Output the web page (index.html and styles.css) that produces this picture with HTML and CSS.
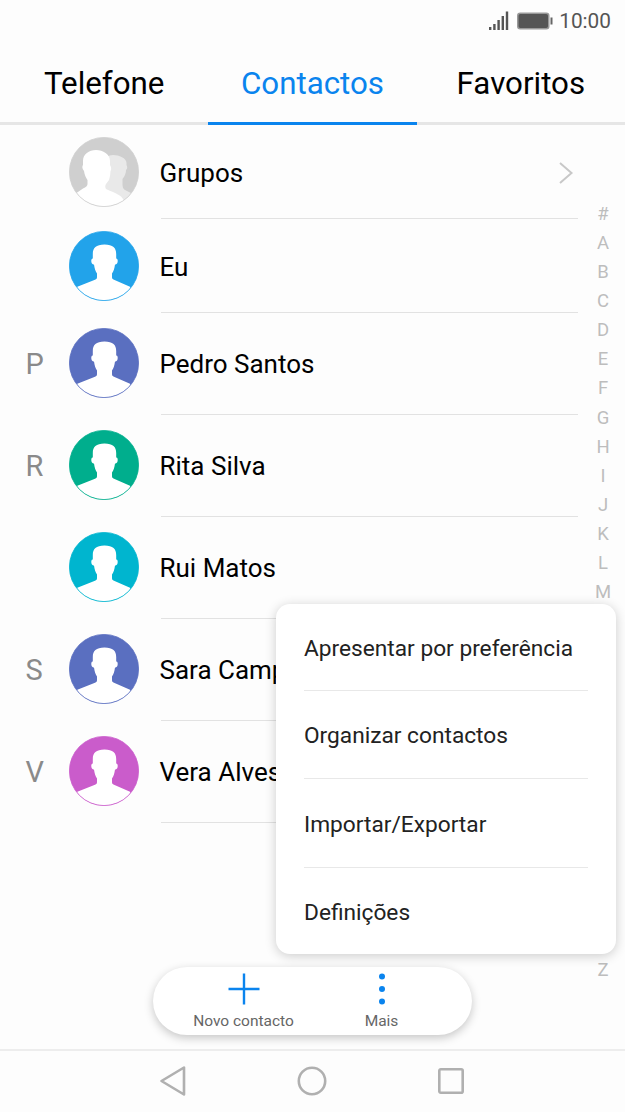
FILE: index.html
```html
<!DOCTYPE html>
<html lang="pt">

<head>
  <meta charset="UTF-8">
  <meta name="viewport" content="width=device-width, initial-scale=1.0">
  <title>Contactos</title>
  <link rel="stylesheet" href="styles.css">
</head>

<body>
  <svg class="defs" width="0" height="0">
    <defs>
      <clipPath id="disc">
        <circle cx="35" cy="35" r="34.5"></circle>
      </clipPath>
      <symbol id="person" viewBox="0 0 70 70">
        <circle cx="35" cy="35" r="34.6" fill="currentColor"></circle>
        <path clip-path="url(#disc)" fill="#fff" d="M35.500 13.500C27 13.500 23.800 17 23.800 23V27.500C22.300 27.500 22 29.500 22.500 31.500C23 33 24 33.500 25 33.500C25.500 37.500 26.500 40.500 28 42.500V46C28 47.500 27.500 48 26 48.700L8.300 55.700L4 70H66L61 55.700L45 48.700C43.500 48 43 47.500 43 46V42.500C44.500 40.500 45.500 37.500 46 33.500C47 33.500 48 33 48.500 31.500C49 29.500 48.700 27.500 47.200 27.500V23C47.200 17 44 13.500 35.500 13.500Z"></path>
        <circle cx="35" cy="35" r="34.6" fill="none" stroke="currentColor" stroke-width="0.8"></circle>
      </symbol>
    </defs>
  </svg>

  <div class="status">
    <svg class="signal" width="20" height="20" viewBox="0 0 20 20">
      <rect x="0" y="16" width="2.400" height="3" fill="#555"></rect>
      <rect x="4.200" y="13" width="2.400" height="6" fill="#555"></rect>
      <rect x="8.400" y="9" width="2.400" height="10" fill="#555"></rect>
      <rect x="12.600" y="5" width="2.400" height="14" fill="#555"></rect>
      <rect x="16.800" y="0.500" width="2.400" height="18.500" fill="#555"></rect>
    </svg>
    <svg class="battery" width="36" height="18" viewBox="0 0 36 18">
      <rect x="0.750" y="1.250" width="31" height="15.500" rx="2.500" fill="#555" stroke="#999" stroke-width="1.500"></rect>
      <rect x="33.500" y="5.500" width="2" height="7" fill="#666"></rect>
    </svg>
    <span class="clock">10:00</span>
  </div>

  <nav class="tabs">
    <a class="tab">Telefone</a>
    <a class="tab active">Contactos</a>
    <a class="tab">Favoritos</a>
  </nav>

  <main class="list">
    <div class="row first">
      <span class="letter"></span>
      <svg class="avatar" viewBox="0 0 70 70">
        <circle cx="35" cy="35" r="34.6" fill="#cfcfcf"></circle>
        <path clip-path="url(#disc)" fill="#e9e9e9" d="M44 18C39 18 36 21 36 26V50L36 56L56 70H70V60L56 53C54 52 53.500 50 53.500 47V42C56 39 57 36 57 33C58.500 32 58.500 30 57.500 28V26C57.500 21 50 18 44 18Z"></path>
        <path clip-path="url(#disc)" fill="#fff" d="M27 13C20 13 14 17 14 24V28C13 29 13 32 15 34C15.500 38 17 41 18.500 43V47C18.500 49 17 50 14 51.500L6 57L4 70H56L54 62C52 58 48 57 37 52C36 50 36 49 37 47L40 43C41 40 41.500 37 41.500 34C42.500 33 42.500 30 41 28V24C41 17 34 13 27 13Z"></path>
        <circle cx="35" cy="35" r="34.6" fill="none" stroke="#cfcfcf" stroke-width="0.8"></circle>
      </svg>
      <span class="name">Grupos</span>
      <svg class="chevron" width="16" height="24" viewBox="0 0 16 24">
        <path d="M2 2L13.500 12L2 22" fill="none" stroke="#c8c8c8" stroke-width="2"></path>
      </svg>
    </div>
    <div class="row first">
      <span class="letter"></span>
      <svg class="avatar c-blue"><use href="#person"></use></svg>
      <span class="name">Eu</span>
    </div>
    <div class="row">
      <span class="letter">P</span>
      <svg class="avatar c-indigo"><use href="#person"></use></svg>
      <span class="name">Pedro Santos</span>
    </div>
    <div class="row">
      <span class="letter">R</span>
      <svg class="avatar c-green"><use href="#person"></use></svg>
      <span class="name">Rita Silva</span>
    </div>
    <div class="row">
      <span class="letter"></span>
      <svg class="avatar c-cyan"><use href="#person"></use></svg>
      <span class="name">Rui Matos</span>
    </div>
    <div class="row">
      <span class="letter">S</span>
      <svg class="avatar c-indigo"><use href="#person"></use></svg>
      <span class="name">Sara Campos</span>
    </div>
    <div class="row">
      <span class="letter">V</span>
      <svg class="avatar c-purple"><use href="#person"></use></svg>
      <span class="name">Vera Alves</span>
    </div>
  </main>

  <ul class="index">
    <li>#</li><li>A</li><li>B</li><li>C</li><li>D</li><li>E</li><li>F</li><li>G</li><li>H</li>
    <li>I</li><li>J</li><li>K</li><li>L</li><li>M</li><li>N</li><li>O</li><li>P</li><li>Q</li>
    <li>R</li><li>S</li><li>T</li><li>U</li><li>V</li><li>W</li><li>X</li><li>Y</li><li>Z</li>
  </ul>

  <div class="menu">
    <div class="menu-item">Apresentar por preferência</div>
    <div class="menu-item">Organizar contactos</div>
    <div class="menu-item">Importar/Exportar</div>
    <div class="menu-item">Definições</div>
  </div>

  <div class="actions">
    <div class="action">
      <svg width="32" height="32" viewBox="0 0 32 32">
        <path d="M16 0.500V31.500M0.500 16H31.500" stroke="#0a84ee" stroke-width="2.400" fill="none"></path>
      </svg>
      <span>Novo contacto</span>
    </div>
    <div class="action">
      <svg width="32" height="32" viewBox="0 0 32 32">
        <circle cx="16" cy="3.500" r="3" fill="#0a84ee"></circle>
        <circle cx="16" cy="16" r="3" fill="#0a84ee"></circle>
        <circle cx="16" cy="28.500" r="3" fill="#0a84ee"></circle>
      </svg>
      <span>Mais</span>
    </div>
  </div>

  <footer class="navbar">
    <svg width="28" height="32" viewBox="0 0 28 32">
      <path d="M25 2.500V29.500L2.500 16Z" fill="none" stroke="#b0b0b0" stroke-width="2.600" stroke-linejoin="round"></path>
    </svg>
    <svg width="30" height="30" viewBox="0 0 30 30">
      <circle cx="15" cy="15" r="13.200" fill="none" stroke="#b0b0b0" stroke-width="2.600"></circle>
    </svg>
    <svg width="28" height="28" viewBox="0 0 28 28">
      <rect x="2.300" y="2.300" width="23.400" height="23.400" rx="1.500" fill="none" stroke="#b0b0b0" stroke-width="2.600"></rect>
    </svg>
  </footer>
</body>

</html>
```

FILE: styles.css
```css
* {
  margin: 0;
  padding: 0;
  box-sizing: border-box;
}

html,
body {
  height: 1112px;
  overflow: hidden;
}

body {
  position: relative;
  display: flex;
  flex-direction: column;
  background-color: #fdfdfd;
  font-family: Roboto, "Liberation Sans", sans-serif;
  color: #000;
}

.defs {
  position: absolute;
}

.status {
  display: flex;
  align-items: center;
  justify-content: flex-end;
  height: 42px;
  padding-right: 14px;
}

.signal {
  margin-right: 8px;
}

.battery {
  margin-right: 6px;
}

.clock {
  font-size: 20.800px;
  color: #555;
}

.tabs {
  display: flex;
  height: 83px;
  border-bottom: 3px solid #e6e6e6;
}

.tab {
  flex: 1;
  text-align: center;
  font-size: 31.300px;
  line-height: 84px;
  margin-bottom: -3px;
  height: 83px;
}

.tab.active {
  color: #0a84ee;
  border-bottom: 3px solid #0a84ee;
}

.list {
  display: flex;
  flex-direction: column;
}

.row {
  position: relative;
  display: flex;
  align-items: center;
  height: 102px;
  padding-left: 25px;
}

.row.first {
  height: 94px;
  padding-top: 1px;
}

.row::after {
  content: "";
  position: absolute;
  left: 161px;
  right: 47px;
  bottom: 0;
  height: 1px;
  background-color: #e2e2e2;
}

.letter {
  width: 44px;
  padding-left: 0.500px;
  font-size: 29px;
  color: #8a8a8a;
}

.avatar {
  width: 70px;
  height: 70px;
  flex-shrink: 0;
  margin: -2px 20.500px 0 0;
}

.c-blue {
  color: #22a3ea;
}

.c-indigo {
  color: #5a6fc0;
}

.c-green {
  color: #00ae8d;
}

.c-cyan {
  color: #00b5cf;
}

.c-purple {
  color: #ca5ccb;
}

.name {
  font-size: 26px;
}

.chevron {
  margin-left: auto;
  margin-right: 51px;
}

.index {
  position: absolute;
  top: 200px;
  right: 12px;
  width: 20px;
  list-style: none;
  text-align: center;
  font-size: 18.500px;
  line-height: 29.080px;
  color: #bdbdbd;
}

.menu {
  position: absolute;
  left: 276px;
  top: 604px;
  width: 340px;
  height: 350px;
  padding: 0 28px;
  background-color: #fff;
  border-radius: 14px;
  box-shadow: 0 2px 12px rgba(0, 0, 0, 0.2);
}

.menu-item {
  display: flex;
  align-items: center;
  height: 88.400px;
  padding-top: 2px;
  font-size: 22.700px;
  color: #222;
  border-bottom: 1px solid #e8e8e8;
}

.menu-item:first-child {
  height: 87px;
}

.menu-item:last-child {
  border-bottom: none;
}

.actions {
  position: absolute;
  left: 153px;
  top: 967px;
  width: 319px;
  height: 68px;
  display: flex;
  padding: 6px 0 0 0;
  background-color: #fff;
  border-radius: 34px;
  box-shadow: 0 3px 10px rgba(0, 0, 0, 0.22);
}

.action {
  display: flex;
  flex-direction: column;
  align-items: center;
  gap: 7px;
  font-size: 15.500px;
  color: #666;
}

.action:first-child {
  width: 181px;
}

.action:last-child {
  width: 95px;
}

.navbar {
  position: absolute;
  left: 0;
  right: 0;
  top: 1049px;
  height: 63px;
  display: flex;
  align-items: center;
  justify-content: space-between;
  padding: 0 160px 2px 159px;
  border-top: 2px solid #ededed;
  background-color: #fdfdfd;
}
```
